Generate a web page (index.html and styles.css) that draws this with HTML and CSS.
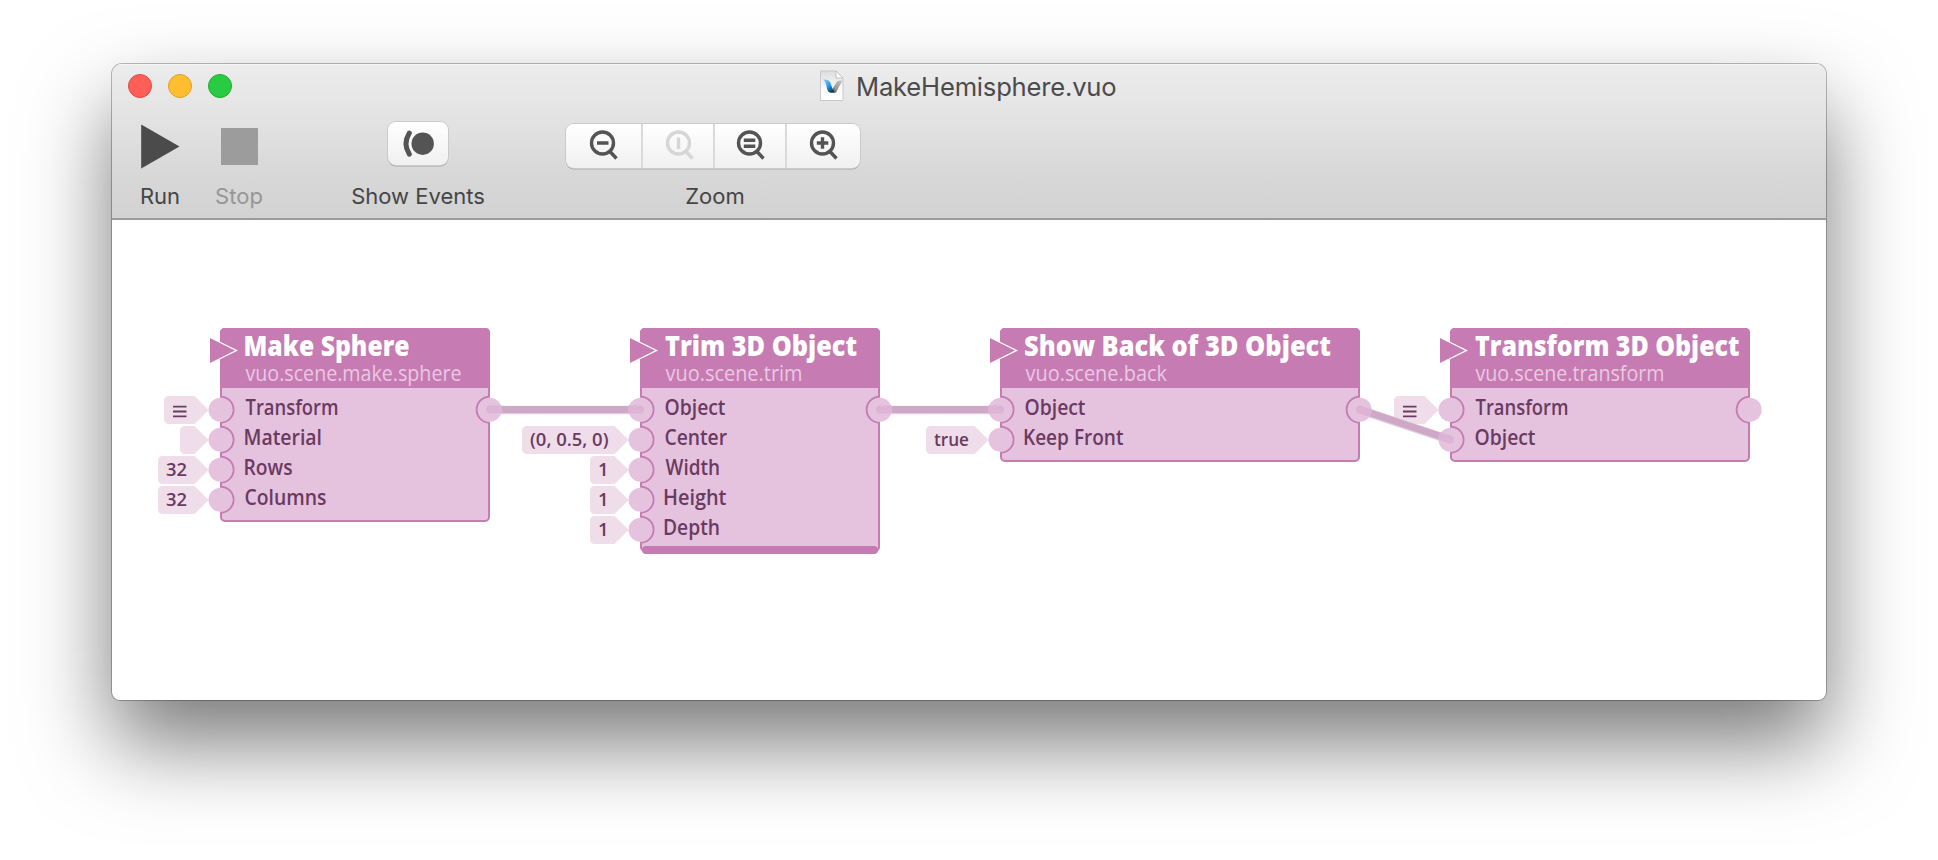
FILE: index.html
```html
<!DOCTYPE html>
<html lang="en">
<head>
<meta charset="utf-8">
<title>MakeHemisphere.vuo</title>
<link rel="stylesheet" href="styles.css">
</head>
<body>
<main class="window">
  <header class="chrome">
    <div class="titlebar">
      <div class="lights"><i class="light close"></i><i class="light minimize"></i><i class="light expand"></i></div>
      <div class="title">
        <svg class="doc" width="24" height="32" viewBox="0 0 24 32">
          <defs>
            <linearGradient id="page" x1="0" y1="0" x2="0" y2="1"><stop offset="0" stop-color="#dcdcdc"/><stop offset=".6" stop-color="#fafafa"/><stop offset="1" stop-color="#fff"/></linearGradient>
            <linearGradient id="blue" x1="0" y1="0" x2=".7" y2="1"><stop offset="0" stop-color="#8ed4fa"/><stop offset=".6" stop-color="#2196e8"/><stop offset="1" stop-color="#10354f"/></linearGradient>
            <linearGradient id="steel" x1="1" y1="0" x2="0" y2="1"><stop offset="0" stop-color="#c4c4c4"/><stop offset=".6" stop-color="#999"/><stop offset="1" stop-color="#333"/></linearGradient>
          </defs>
          <path d="M.5 1H16l7 7v22.500H.5z" fill="url(#page)" stroke="#c9c9c9"/>
          <path d="M16 1v7h7z" fill="#fff" stroke="#b5b5b5" stroke-width=".8"/>
          <path d="M17.500 11 22.500 10.500 16 22.500h-6z" fill="url(#steel)"/>
          <path d="M2.500 9.500C6.500 9 9.500 10 10.500 13l2 6 2.500 3.500H10C6.500 21.500 7 16 5.500 13 5 11 4 10 2.500 9.500z" fill="url(#blue)"/>
        </svg>
        <span>MakeHemisphere.vuo</span>
      </div>
    </div>
    <div class="toolbar">
      <div class="tool run">
        <svg class="glyph" width="40" height="46" viewBox="0 0 40 46"><path d="M1.200 1.500 39.500 23.500 1.200 45.500z"/></svg>
        <span class="caption">Run</span>
      </div>
      <div class="tool stop">
        <i class="square"></i>
        <span class="caption">Stop</span>
      </div>
      <div class="tool events">
        <button class="button" aria-label="Show Events"><svg width="60" height="43" viewBox="0 0 60 43"><circle cx="34.700" cy="21.700" r="11.200" fill="#545454"/><path d="M21.300 11.200Q14.700 21.700 21.300 32.200" fill="none" stroke="#545454" stroke-width="5" stroke-linecap="round"/></svg></button>
        <span class="caption">Show Events</span>
      </div>
      <div class="tool zoom">
        <div class="segments">
          <button class="seg first" aria-label="Zoom Out"><svg class="lens" viewBox="0 0 30 32"><circle cx="13.500" cy="14" r="11"/><path d="m20.500 22 7 7.500M8 14h11.500"/></svg></button>
          <button class="seg off" aria-label="Actual Size"><svg class="lens" viewBox="0 0 30 32"><circle cx="13.500" cy="14" r="11"/><path d="m20.500 22 7 7.500M13.500 8.500v11.500"/></svg></button>
          <button class="seg fit" aria-label="Zoom to Fit"><svg class="lens" viewBox="0 0 30 32"><circle cx="13.500" cy="14" r="11"/><path d="m20.500 22 7 7.500M7.800 11.200h11.500M7.800 17.200h11.500"/></svg></button>
          <button class="seg" aria-label="Zoom In"><svg class="lens" viewBox="0 0 30 32"><circle cx="13.500" cy="14" r="11"/><path d="m20.500 22 7 7.500M7.800 14h11.500M13.500 8.200v11.600"/></svg></button>
        </div>
        <span class="caption">Zoom</span>
      </div>
    </div>
  </header>
  <svg class="canvas" width="1714" height="480" viewBox="112 220 1714 480">
    <defs>
      <g id="in"><path class="arc" d="M0-13A13 13 0 0 1 0 13"/><circle class="port" r="12"/></g>
      <g id="out"><path class="arc" d="M0-13A13 13 0 0 0 0 13"/><circle class="port" r="12"/></g>
      <g id="event"><path class="edge" d="M-10-12.800 16 0-10 12.800"/><path class="accent" d="M-10-12.500 15 0-10 12.500z"/></g>
      <path id="list" class="list" d="M0-4.800H13.500M0 0H13.500M0 4.800H13.500"/>
    </defs>

    <g class="tags">
      <path d="M169 396H194.500L208.700 410 194.500 424H169q-5 0-5-5V401q0-5 5-5z"/>
      <path d="M185 426H194.500L208.700 440 194.500 454H185q-5 0-5-5V431q0-5 5-5z"/>
      <path d="M163 456H194.500L208.700 470 194.500 484H163q-5 0-5-5V461q0-5 5-5z"/>
      <path d="M163 486H194.500L208.700 500 194.500 514H163q-5 0-5-5V491q0-5 5-5z"/>
      <path d="M527 426H614.500L628.700 440 614.500 454H527q-5 0-5-5V431q0-5 5-5z"/>
      <path d="M595 456H614.500L628.700 470 614.500 484H595q-5 0-5-5V461q0-5 5-5z"/>
      <path d="M595 486H614.500L628.700 500 614.500 514H595q-5 0-5-5V491q0-5 5-5z"/>
      <path d="M595 516H614.500L628.700 530 614.500 544H595q-5 0-5-5V521q0-5 5-5z"/>
      <path d="M931 426H974.500L988.700 440 974.500 454H931q-5 0-5-5V431q0-5 5-5z"/>
      <path d="M1399 396H1424.500L1438.700 410 1424.500 424H1399q-5 0-5-5V401q0-5 5-5z"/>
    </g>
    <use href="#list" x="173" y="411.500"/>
    <use href="#list" x="1403" y="411.500"/>

    <g class="bodies">
      <rect x="221" y="329" width="268" height="192" rx="4"/>
      <rect x="641" y="329" width="238" height="222" rx="4"/>
      <rect x="1001" y="329" width="358" height="132" rx="4"/>
      <rect x="1451" y="329" width="298" height="132" rx="4"/>
    </g>
    <g class="accent">
      <path d="M220 388V333q0-5 5-5H485q5 0 5 5V388z"/>
      <path d="M640 388V333q0-5 5-5H875q5 0 5 5V388z"/>
      <path d="M1000 388V333q0-5 5-5H1355q5 0 5 5V388z"/>
      <path d="M1450 388V333q0-5 5-5H1745q5 0 5 5V388z"/>
      <rect x="642" y="546" width="236" height="8" rx="4"/>
    </g>
    <use href="#event" x="220" y="350.500"/>
    <use href="#event" x="640" y="350.500"/>
    <use href="#event" x="1000" y="350.500"/>
    <use href="#event" x="1450" y="350.500"/>

    <g class="halo"><path d="M490 409.900H640M880 409.900H1000M1360 409.900 1450 439.900"/></g>
    <g class="wire"><path d="M490 409.500H640M880 409.500H1000M1360 409.500 1450 439.500"/></g>

    <use href="#in" x="220.500" y="409.700"/>
    <use href="#in" x="220.500" y="439.700"/>
    <use href="#in" x="220.500" y="469.700"/>
    <use href="#in" x="220.500" y="499.700"/>
    <use href="#out" x="489.700" y="409.700"/>
    <use href="#in" x="640.500" y="409.700"/>
    <use href="#in" x="640.500" y="439.700"/>
    <use href="#in" x="640.500" y="469.700"/>
    <use href="#in" x="640.500" y="499.700"/>
    <use href="#in" x="640.500" y="529.700"/>
    <use href="#out" x="879.700" y="409.700"/>
    <use href="#in" x="1000.500" y="409.700"/>
    <use href="#in" x="1000.500" y="439.700"/>
    <use href="#out" x="1359.700" y="409.700"/>
    <use href="#in" x="1450.500" y="409.700"/>
    <use href="#in" x="1450.500" y="439.700"/>
    <use href="#out" x="1749.700" y="409.700"/>
    <g class="plug">
      <path d="M490 409.500h11.700M640 409.500h-11.700M880 409.500h11.700M1000 409.500h-11.700M1360 409.500l11 3.700M1450 439.500l-11-3.700"/>
      <circle cx="490" cy="409.500" r="4"/><circle cx="640" cy="409.500" r="4"/><circle cx="880" cy="409.500" r="4"/><circle cx="1000" cy="409.500" r="4"/><circle cx="1360" cy="409.500" r="4"/><circle cx="1450" cy="439.500" r="4"/>
    </g>

    <g class="name">
      <text x="243.500" y="355.700" textLength="166" lengthAdjust="spacingAndGlyphs">Make Sphere</text>
      <text x="665" y="355.700" textLength="192" lengthAdjust="spacingAndGlyphs">Trim 3D Object</text>
      <text x="1024" y="355.700" textLength="307" lengthAdjust="spacingAndGlyphs">Show Back of 3D Object</text>
      <text x="1475" y="355.700" textLength="264.500" lengthAdjust="spacingAndGlyphs">Transform 3D Object</text>
    </g>
    <g class="path">
      <text x="245.500" y="380.900" textLength="216" lengthAdjust="spacingAndGlyphs">vuo.scene.make.sphere</text>
      <text x="665.500" y="380.900" textLength="137" lengthAdjust="spacingAndGlyphs">vuo.scene.trim</text>
      <text x="1025.500" y="380.900" textLength="141.500" lengthAdjust="spacingAndGlyphs">vuo.scene.back</text>
      <text x="1475.500" y="380.900" textLength="189" lengthAdjust="spacingAndGlyphs">vuo.scene.transform</text>
    </g>
    <g class="label">
      <text x="245.500" y="414.700" textLength="93" lengthAdjust="spacingAndGlyphs">Transform</text>
      <text x="243.500" y="444.700" textLength="78.500" lengthAdjust="spacingAndGlyphs">Material</text>
      <text x="243.500" y="474.700" textLength="49" lengthAdjust="spacingAndGlyphs">Rows</text>
      <text x="244.500" y="504.700" textLength="82" lengthAdjust="spacingAndGlyphs">Columns</text>
      <text x="664.500" y="414.700" textLength="61" lengthAdjust="spacingAndGlyphs">Object</text>
      <text x="664.500" y="444.700" textLength="62.500" lengthAdjust="spacingAndGlyphs">Center</text>
      <text x="665.500" y="474.700" textLength="54.500" lengthAdjust="spacingAndGlyphs">Width</text>
      <text x="663" y="504.700" textLength="63.500" lengthAdjust="spacingAndGlyphs">Height</text>
      <text x="663" y="534.700" textLength="57" lengthAdjust="spacingAndGlyphs">Depth</text>
      <text x="1024.500" y="414.700" textLength="61" lengthAdjust="spacingAndGlyphs">Object</text>
      <text x="1023" y="444.700" textLength="100.500" lengthAdjust="spacingAndGlyphs">Keep Front</text>
      <text x="1475.500" y="414.700" textLength="93" lengthAdjust="spacingAndGlyphs">Transform</text>
      <text x="1474.500" y="444.700" textLength="61" lengthAdjust="spacingAndGlyphs">Object</text>
    </g>
    <g class="value">
      <text x="166" y="475.700" textLength="21" lengthAdjust="spacingAndGlyphs">32</text>
      <text x="166" y="505.700" textLength="21" lengthAdjust="spacingAndGlyphs">32</text>
      <text x="530" y="445.700" textLength="78.500" lengthAdjust="spacingAndGlyphs">(0, 0.5, 0)</text>
      <text x="598" y="475.700">1</text>
      <text x="598" y="505.700">1</text>
      <text x="598" y="535.700">1</text>
      <text x="934" y="445.700" textLength="35" lengthAdjust="spacingAndGlyphs">true</text>
    </g>
  </svg>
</main>
</body>
</html>
```
FILE: styles.css
```css
* { box-sizing: border-box; }
body {
  margin: 0;
  height: 860px;
  overflow: hidden;
  background: #fff;
  font-family: Inter, "Liberation Sans", sans-serif;
}
.window {
  width: 1714px;
  height: 636px;
  margin: 64px 0 0 112px;
  border-radius: 10px 10px 8px 8px;
  background: #fff;
  box-shadow: 0 0 0 1px rgba(0, 0, 0, .26), 0 43px 86px rgba(0, 0, 0, .53);
  overflow: hidden;
}
.chrome {
  height: 156px;
  border-bottom: 2px solid #9b9b9b;
  background: linear-gradient(#ececec, #e6e6e6 25%, #d8d8d8 70%, #d2d2d2);
  box-shadow: inset 0 1px #f6f6f6;
}
.titlebar {
  display: flex;
  height: 46px;
  padding: 10px 16px 0;
}
.lights { display: flex; gap: 16px; width: 692px; }
.light {
  width: 24px;
  height: 24px;
  border-radius: 50%;
}
.close { background: #ff5f57; border: 1px solid #e2463f; }
.minimize { background: #ffbe2f; border: 1px solid #e1a023; }
.expand { background: #28cb41; border: 1px solid #1dad2b; }
.title {
  display: flex;
  gap: 12px;
  margin-top: -4px;
  color: #4b4b4b;
  font-size: 25.600px;
  line-height: 34px;
  white-space: nowrap;
}
.title span { letter-spacing: -.2px; }
.doc { flex: none; }
.toolbar { display: flex; height: 108px; }
.tool {
  display: flex;
  flex-direction: column;
  align-items: center;
  justify-content: space-between;
  padding-bottom: 8px;
}
.caption {
  color: #454545;
  font-size: 22px;
  line-height: 28px;
  white-space: nowrap;
}
.run { width: 60px; margin-left: 18px; padding-top: 13px; }
.glyph { fill: #4b4b4b; }
.stop { width: 60px; margin-left: 19px; padding-top: 18px; }
.stop .caption { color: #969696; }
.square { width: 37px; height: 37px; background: #9c9c9c; }
.events { width: 140px; margin-left: 79px; padding-top: 12px; }
.button, .segments {
  border-radius: 8px;
  background: linear-gradient(#fff, #f0f0f0);
  box-shadow: 0 0 0 1px #cacaca, 0 1.500px 0 #a5a5a5;
}
.button { width: 60px; height: 43px; padding: 0; border: 0; }
.button svg { display: block; }
.zoom { width: 294px; margin-left: 78px; padding-top: 14px; }
.zoom .caption { padding-left: 4px; }
.segments { display: flex; width: 294px; height: 44px; }
.seg {
  width: 72px;
  padding: 0 0 0 22px;
  border: 0;
  border-left: 2px solid #dadada;
  background: none;
}
.seg.first { width: 75px; padding-left: 23px; border-left: 0; }
.seg.fit { padding-left: 21px; }
.lens {
  display: block;
  width: 30px;
  height: 32px;
  margin-top: -3px;
  fill: none;
  stroke: #545454;
  stroke-width: 3.400;
}
.off .lens { stroke: #d6d6d6; }
.canvas {
  display: block;
  font-family: "Open Sans", "Noto Sans", sans-serif;
}
.tags { fill: #efdeea; }
.list { fill: none; stroke: #6a3a62; stroke-width: 1.800; }
.bodies { fill: #e5c3de; stroke: #c67bb3; stroke-width: 2; }
.accent { fill: #c67bb3; }
.edge { fill: none; stroke: #fff; stroke-width: 1.800; }
.halo { fill: none; stroke: #e5cbe0; stroke-width: 8.500; }
.wire { fill: none; stroke: #cda9c6; stroke-width: 7; }
.arc { fill: #e5c3de; stroke: #c67bb3; stroke-width: 2; }
.port { fill: #e5c3de; }
.plug { fill: #ddb4d5; }
.plug path { stroke: #ddb4d5; stroke-width: 8; }
.name { fill: #fff; font-size: 28.500px; font-weight: 800; }
.path { fill: #e9c9e2; font-size: 21.500px; font-weight: 500; }
.label { fill: #6a3a62; font-size: 21px; font-weight: 600; }
.value { fill: #6a3a62; font-size: 18.500px; font-weight: 600; }
```
